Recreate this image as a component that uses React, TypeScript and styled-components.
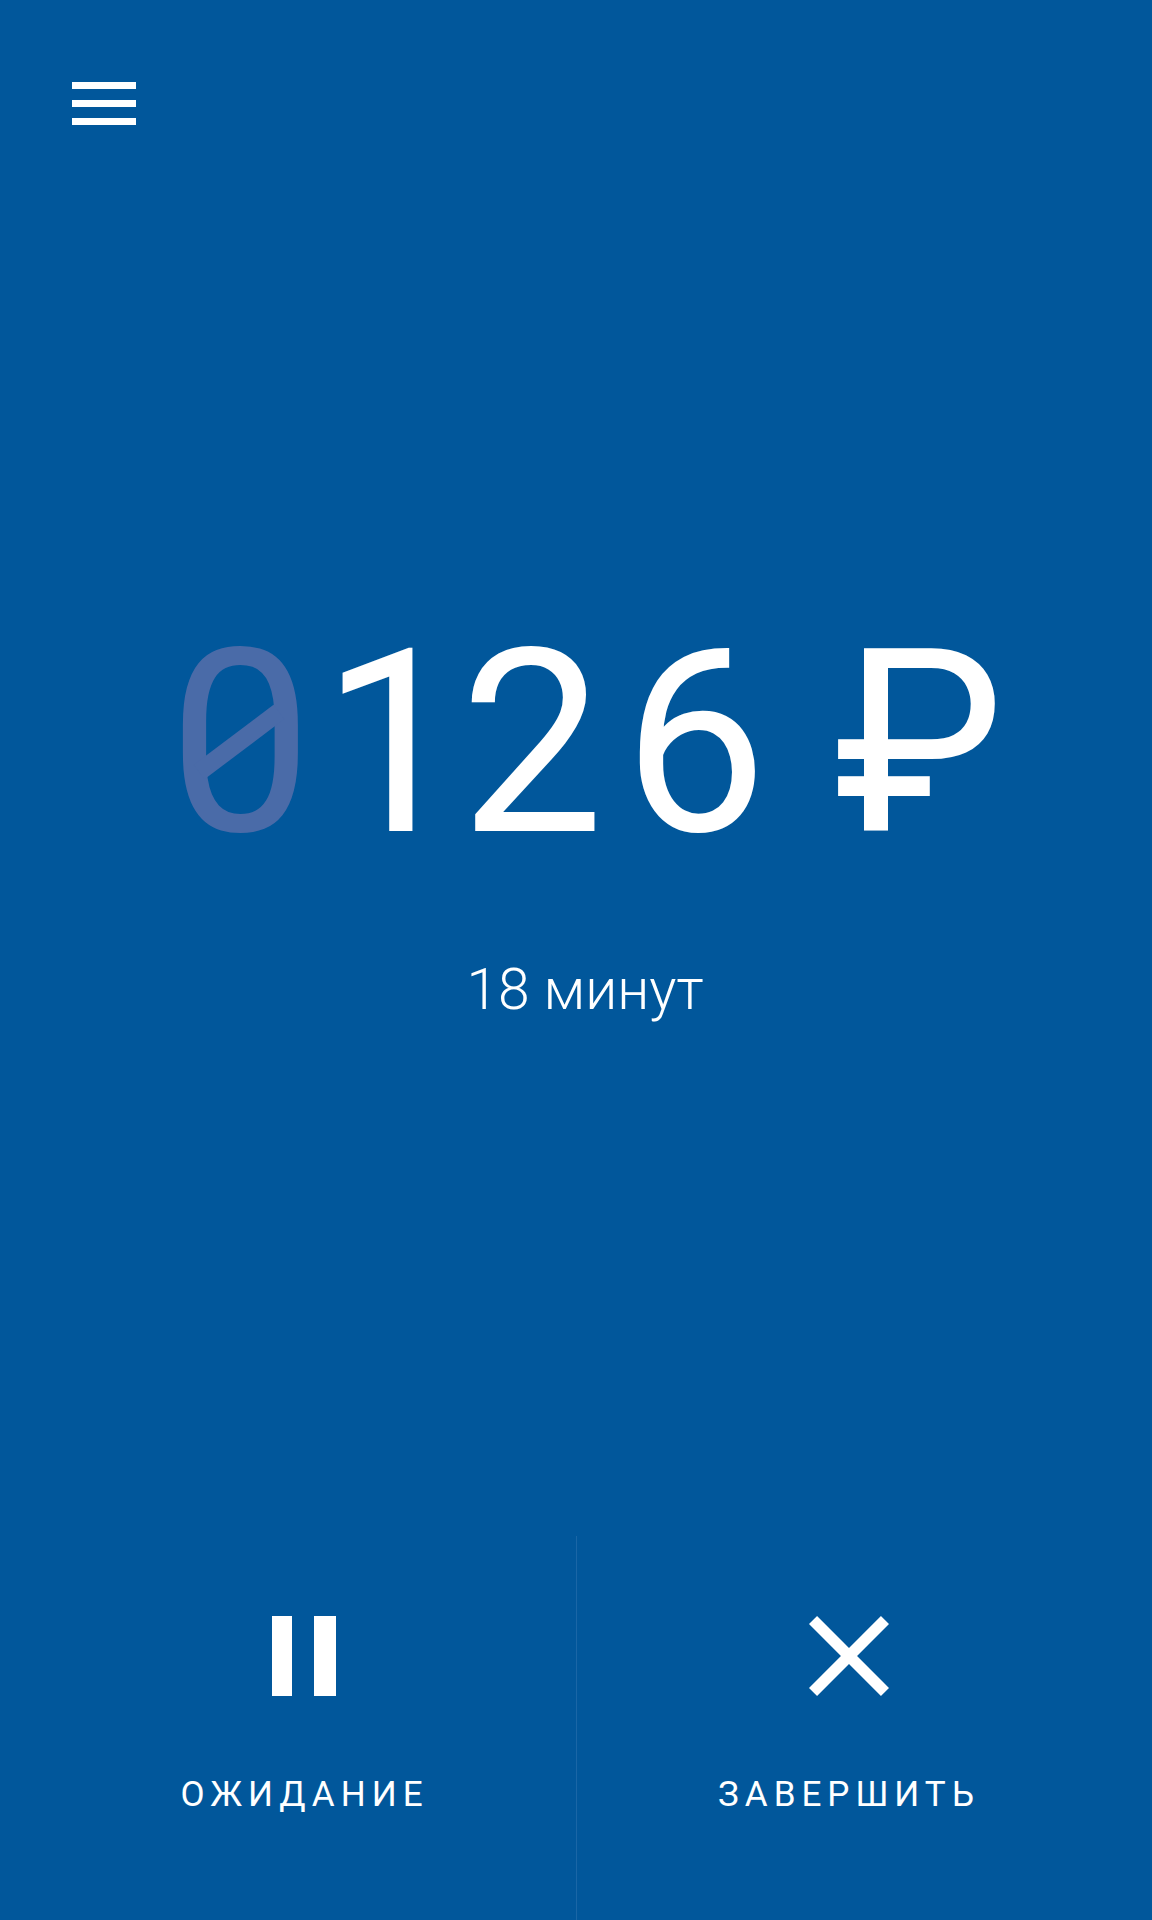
import React from "react";
import styled, { createGlobalStyle } from "styled-components";

const GlobalStyle = createGlobalStyle`
  html, body {
    margin: 0;
    padding: 0;
    background: #01579b;
  }
  body {
    font-family: Roboto, "Noto Sans", Arial, sans-serif;
    color: #ffffff;
  }
  * { box-sizing: border-box; }
`;

const Screen = styled.div`
  width: 100%;
  height: 1920px;
  background: #01579b;
  display: flex;
  flex-direction: column;
  overflow: hidden;
`;

const TopBar = styled.header`
  display: flex;
  padding: 82px 0 0 72px;
`;

const MenuButton = styled.button`
  width: 64px;
  height: 43px;
  padding: 0;
  border: 0;
  background: transparent;
  display: flex;
  flex-direction: column;
  justify-content: space-between;
  cursor: pointer;
`;

const MenuBar = styled.span`
  display: block;
  width: 64px;
  height: 7px;
  background: #ffffff;
`;

const Center = styled.main`
  display: flex;
  flex-direction: column;
  align-items: center;
  padding-left: 18px;
`;

const Amount = styled.div`
  margin-top: 491px;
  font-family: Roboto, sans-serif;
  font-weight: 400;
  font-size: 256px;
  line-height: 256px;
  height: 256px;
  letter-spacing: 17px;
  font-variant-numeric: proportional-nums;
  white-space: nowrap;
  color: #ffffff;
`;

const Zero = styled.span<{ $slashLeft: number }>`
  position: relative;
  color: #4a6ba8;
  &::after {
    content: "";
    position: absolute;
    left: ${(p) => p.$slashLeft}px;
    top: 140px;
    width: 100px;
    height: 18px;
    background: #4a6ba8;
    transform: rotate(-37deg);
  }
`;

const Currency = styled.span`
  letter-spacing: 0;
  margin-left: 50px;
`;

const Duration = styled.div`
  margin-top: 89px;
  font-family: Roboto, sans-serif;
  font-weight: 300;
  font-size: 57px;
  line-height: 57px;
  color: #ffffff;
`;

const Spacer = styled.div`
  flex: 1;
`;

const BottomBar = styled.nav`
  height: 384px;
  margin: 0 32px;
  display: grid;
  grid-template-columns: 1fr 1fr;
`;

const Action = styled.button<{ $divider?: boolean }>`
  border: 0;
  border-left: ${(p) => (p.$divider ? "1px solid #1a66a6" : "0")};
  background: transparent;
  color: #ffffff;
  display: flex;
  flex-direction: column;
  align-items: center;
  padding: 80px 0 0;
  gap: 81px;
  cursor: pointer;
`;

const IconBox = styled.span`
  display: flex;
  width: 80px;
  height: 80px;
  align-items: center;
  justify-content: center;
`;

const Label = styled.span`
  font-family: Roboto, sans-serif;
  font-weight: 400;
  font-size: 35px;
  line-height: 35px;
  letter-spacing: 6px;
  margin-right: -1px;
  color: #ffffff;
`;

const PauseIcon = () => (
  <svg width="64" height="80" viewBox="0 0 64 80">
    <rect x="0" y="0" width="20" height="80" fill="#fff" />
    <rect x="42" y="0" width="22" height="80" fill="#fff" />
  </svg>
);

const CloseIcon = () => (
  <svg width="80" height="80" viewBox="5 5 14 14">
    <path
      fill="#fff"
      d="M19 6.41L17.59 5 12 10.59 6.41 5 5 6.41 10.59 12 5 17.59 6.41 19 12 13.41 17.59 19 19 17.59 13.41 12z"
    />
  </svg>
);

export default function App() {
  return (
    <>
      <GlobalStyle />
      <Screen>
        <TopBar>
          <MenuButton aria-label="Меню">
            <MenuBar />
            <MenuBar />
            <MenuBar />
          </MenuButton>
        </TopBar>
        <Center>
          <Amount>
            <Zero $slashLeft={23}>0</Zero>126<Currency>₽</Currency>
          </Amount>
          <Duration>18 минут</Duration>
        </Center>
        <Spacer />
        <BottomBar>
          <Action>
            <IconBox>
              <PauseIcon />
            </IconBox>
            <Label>ОЖИДАНИЕ</Label>
          </Action>
          <Action $divider>
            <IconBox>
              <CloseIcon />
            </IconBox>
            <Label>ЗАВЕРШИТЬ</Label>
          </Action>
        </BottomBar>
      </Screen>
    </>
  );
}
